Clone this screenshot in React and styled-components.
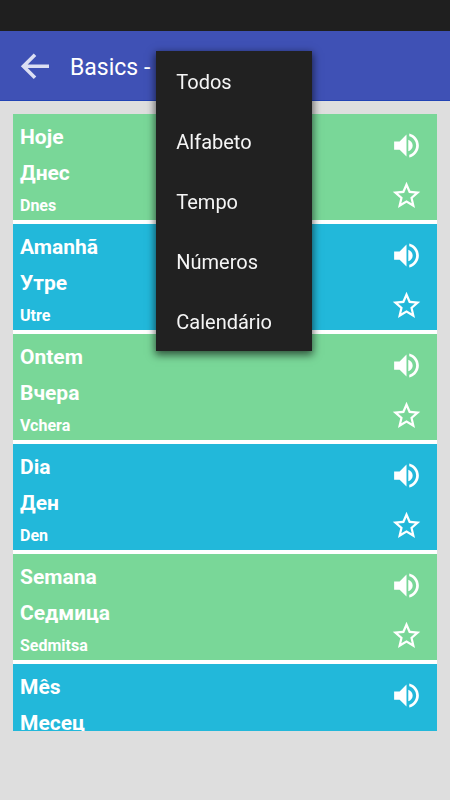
import React, { useState } from "react";

import styled, { createGlobalStyle } from "styled-components";

const categories = ["Todos", "Alfabeto", "Tempo", "Números", "Calendário"];

const words = [
	{ native: "Hoje", foreign: "Днес", latin: "Dnes" },
	{ native: "Amanhã", foreign: "Утре", latin: "Utre" },
	{ native: "Ontem", foreign: "Вчера", latin: "Vchera" },
	{ native: "Dia", foreign: "Ден", latin: "Den" },
	{ native: "Semana", foreign: "Седмица", latin: "Sedmitsa" },
	{ native: "Mês", foreign: "Месец", latin: "Mesets" }
];

const BackIcon = () => (
	<svg width="30" height="28" viewBox="0 0 30 28" aria-hidden="true">
		<path
			d="M15 2.8L3.4 14.3L15 25.8M4 14.3H29"
			fill="none"
			stroke="#dcdff3"
			strokeWidth="3.6"
		/>
	</svg>
);

const SpeakerIcon = () => (
	<svg width="33" height="33" viewBox="0 0 24 24" aria-hidden="true">
		<path
			fill="#fff"
			d="M3 9v6h4l5 5V4L7 9H3zm13.5 3c0-1.9-1.3-3.6-3.2-4.2v8.4c1.9-.6 3.2-2.3 3.2-4.2zM14 3.23v2.06c2.89.86 5 3.54 5 6.71s-2.11 5.85-5 6.71v2.06c4.01-.91 7-4.49 7-8.77s-2.99-7.86-7-8.77z"
		/>
	</svg>
);

const StarIcon = ({ filled }) => (
	<svg width="33" height="33" viewBox="0 0 24 24" aria-hidden="true">
		<path
			fill="#fff"
			d={
				filled
					? "M12 17.27L18.18 21l-1.64-7.03L22 9.24l-7.19-.61L12 2 9.19 8.63 2 9.24l5.46 4.73L5.82 21z"
					: "M22 9.24l-7.19-.62L12 2 9.19 8.63 2 9.24l5.46 4.73L5.82 21 12 17.27 18.18 21l-1.63-7.03L22 9.24zM12 15.4l-3.76 2.27 1-4.28-3.32-2.88 4.38-.38L12 6.1l1.71 4.04 4.38.38-3.32 2.88 1 4.28L12 15.4z"
			}
		/>
	</svg>
);

const WordRow = ({ word }) => {
	const [favorite, setFavorite] = useState(false);

	return (
		<Row>
			<Words>
				<Word>{word.native}</Word>
				<Word lang="bg">{word.foreign}</Word>
				<Transcription>{word.latin}</Transcription>
			</Words>
			<Actions>
				<IconButton type="button" aria-label={`Ouvir ${word.native}`}>
					<SpeakerIcon />
				</IconButton>
				<IconButton
					type="button"
					aria-label={`Favorito ${word.native}`}
					aria-pressed={favorite}
					onClick={() => setFavorite(!favorite)}
				>
					<StarIcon filled={favorite} />
				</IconButton>
			</Actions>
		</Row>
	);
};

const App = () => {
	const [menuOpen, setMenuOpen] = useState(true);

	return (
		<Screen>
			<GlobalStyle />
			<StatusBar />
			<Toolbar>
				<IconButton type="button" aria-label="Voltar">
					<BackIcon />
				</IconButton>
				<Title>Basics -</Title>
				<MenuAnchor>
					<MenuToggle
						type="button"
						aria-label="Categoria"
						aria-haspopup="menu"
						aria-expanded={menuOpen}
						onClick={() => setMenuOpen(!menuOpen)}
					/>
					{menuOpen && (
						<Menu role="menu">
							{categories.map(category => (
								<MenuItem
									key={category}
									type="button"
									role="menuitem"
									onClick={() => setMenuOpen(false)}
								>
									{category}
								</MenuItem>
							))}
						</Menu>
					)}
				</MenuAnchor>
			</Toolbar>
			<Content>
				<WordList>
					{words.map(word => (
						<WordRow key={word.latin} word={word} />
					))}
				</WordList>
			</Content>
		</Screen>
	);
};

const GlobalStyle = createGlobalStyle`
	* {
		box-sizing: border-box;
	}
	body {
		margin: 0;
		background-color: #dedede;
		font-family: Roboto, "Noto Sans", sans-serif;
	}
`;

const Screen = styled.div`
	display: flex;
	flex-direction: column;
	height: 100vh;
`;

const StatusBar = styled.div`
	flex: none;
	height: 31px;
	background-color: #1f1f1f;
`;

const Toolbar = styled.header`
	display: flex;
	flex: none;
	align-items: center;
	height: 70px;
	padding: 0 20px;
	background-color: #3f51b5;
	border-bottom: 1px solid #2343b4;
`;

const Title = styled.h1`
	margin: 0 0 0 20px;
	padding-top: 4px;
	font-size: 23px;
	font-weight: 400;
	line-height: 32px;
	color: #ffffff;
`;

const MenuAnchor = styled.div`
	position: relative;
	align-self: stretch;
	margin-left: 6px;
`;

const MenuToggle = styled.button`
	width: 156px;
	height: 100%;
	border: 0;
	background: none;
`;

const Menu = styled.div`
	position: absolute;
	top: 20px;
	left: 0;
	z-index: 1;
	width: 156px;
	background-color: #212121;
	box-shadow: 0 3px 8px 1px rgba(0, 0, 0, 0.6);
`;

const MenuItem = styled.button`
	display: block;
	width: 100%;
	height: 60px;
	padding: 2px 20px 0;
	border: 0;
	background: none;
	font-family: inherit;
	font-size: 20px;
	line-height: 24px;
	text-align: left;
	color: #f5f5f5;
	:hover {
		background-color: #333333;
	}
`;

const Content = styled.main`
	flex: 1;
	min-height: 0;
	padding: 13px 13px 69px;
`;

const WordList = styled.ul`
	height: 100%;
	margin: 0;
	padding: 0;
	overflow-y: auto;
	scrollbar-width: none;
	list-style: none;
`;

const Row = styled.li`
	display: flex;
	justify-content: space-between;
	height: 110px;
	padding: 5px 14px 0 7px;
	border-bottom: 4px solid #ffffff;
	background-color: #79d798;
	&:nth-child(even) {
		background-color: #22b8da;
	}
`;

const Words = styled.div`
	color: #ffffff;
	font-weight: 700;
`;

const Word = styled.div`
	font-size: 21px;
	line-height: 36px;
`;

const Transcription = styled.div`
	font-size: 16px;
	line-height: 30px;
`;

const Actions = styled.div`
	display: flex;
	flex-direction: column;
	gap: 17px;
	padding-top: 10px;
`;

const IconButton = styled.button`
	display: flex;
	padding: 0;
	border: 0;
	background: none;
	cursor: pointer;
`;

export default App;
